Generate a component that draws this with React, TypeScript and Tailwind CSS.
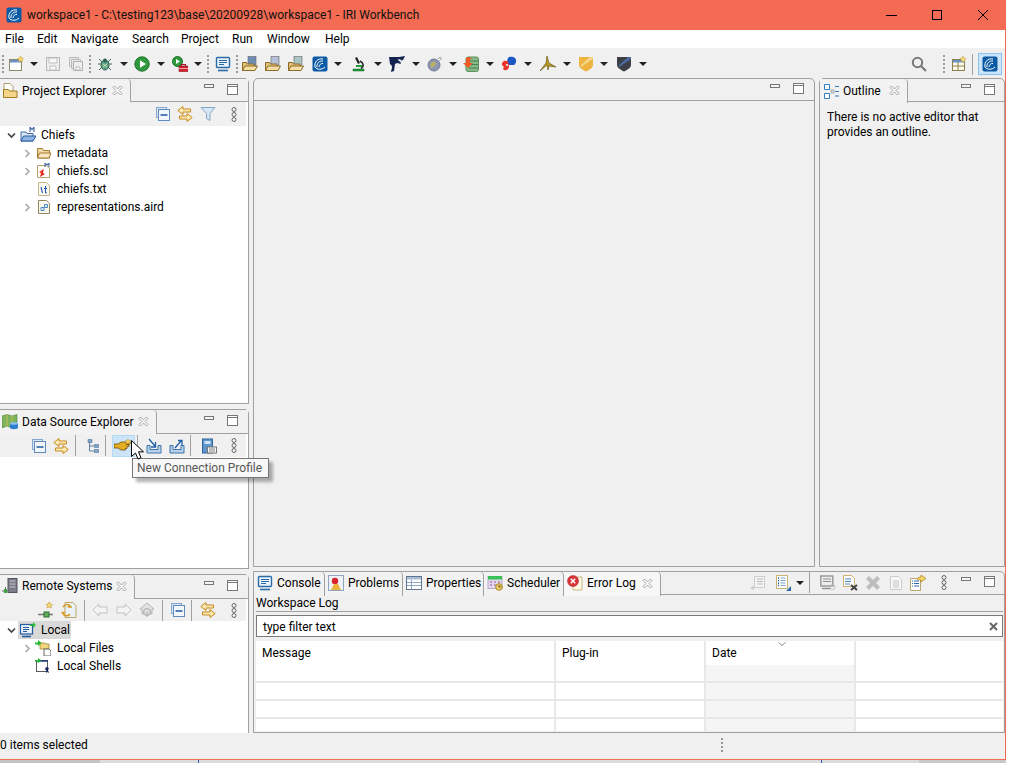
import type { ReactNode } from "react";

type IconProps = { className?: string };

const Ico = ({ className = "", children }: IconProps & { children: ReactNode }) => (
  <svg viewBox="0 0 16 16" className={`w-4 h-4 shrink-0 ${className}`}>{children}</svg>
);

const Arrow = ({ className = "" }: IconProps) => (
  <svg viewBox="0 0 8 4" className={`w-2 h-1 shrink-0 ${className}`}><path d="M0 0h8L4 4z" fill="#222" /></svg>
);

const Iri = ({ className = "" }: IconProps) => (
  <Ico className={className}>
    <rect x="0.5" y="0.5" width="15" height="15" rx="2" fill="#0b5aa5" />
    <path d="M3 11C2 6 6 2 11 3M5 11C4.500 8 7 4.500 11 5M7 11c0-2 2-4 4-3.500M3 11c2 3 7 3 10 0" fill="none" stroke="#fff" strokeWidth="1" />
  </Ico>
);

const NewFile = ({ className = "" }: IconProps) => (
  <Ico className={className}>
    <rect x="1.500" y="3.500" width="12" height="11" fill="#fff" stroke="#8a8a6a" />
    <rect x="2" y="4" width="11" height="2.500" fill="#6c93c8" />
    <path d="M12.500 0l1 2 2 .5-1.500 1.500.5 2-2-1-2 1 .5-2L9.500 2.500l2-.5z" fill="#f5d76e" stroke="#c29a2a" strokeWidth=".5" />
  </Ico>
);

const Save = ({ className = "" }: IconProps) => (
  <Ico className={className}>
    <path d="M1.500 1.500h13v13h-13z" fill="#eee" stroke="#b5b5b5" />
    <path d="M4 2h8v5H4zM5 10h6v4H5z" fill="#f7f7f7" stroke="#c0c0c0" />
  </Ico>
);

const SaveAll = ({ className = "" }: IconProps) => (
  <Ico className={className}>
    <path d="M1.500 1.500h9v9h-9z" fill="#e8e8e8" stroke="#bbb" />
    <path d="M3.500 3.500h9v9h-9z" fill="#e8e8e8" stroke="#bbb" />
    <path d="M5.500 5.500h9v9h-9z" fill="#eee" stroke="#b0b0b0" />
    <path d="M8 11h4v3H8z" fill="#fafafa" stroke="#bbb" />
  </Ico>
);

const Bug = ({ className = "" }: IconProps) => (
  <Ico className={className}>
    <path d="M2 3l3 3M14 3l-3 3M1 8h3M15 8h-3M2 14l3-3M14 14l-3-3" stroke="#3f6b5a" strokeWidth="1" />
    <ellipse cx="8" cy="9" rx="4" ry="5" fill="#5fa08a" stroke="#2f5f50" />
    <circle cx="8" cy="4.500" r="2" fill="#2f5f50" />
    <path d="M6 8l4 3M10 8l-4 3" stroke="#c8e0a0" />
  </Ico>
);

const Run = ({ className = "" }: IconProps) => (
  <Ico className={className}>
    <circle cx="8" cy="8" r="7.200" fill="#2f9a3d" stroke="#1f6f2a" />
    <path d="M6 4.200L12 8l-6 3.800z" fill="#fff" />
  </Ico>
);

const ExtTools = ({ className = "" }: IconProps) => (
  <Ico className={className}>
    <circle cx="5.500" cy="5.500" r="5" fill="#2f9a3d" stroke="#1f6f2a" />
    <path d="M4 3l4 2.500L4 8z" fill="#fff" />
    <rect x="7" y="10" width="9" height="5.500" fill="#d8202f" stroke="#8e1420" strokeWidth=".6" />
    <rect x="9.500" y="8.500" width="4" height="2" fill="none" stroke="#a81824" />
    <path d="M7 12.500h9" stroke="#fff" strokeWidth=".6" />
  </Ico>
);

const Monitor = ({ className = "" }: IconProps) => (
  <Ico className={className}>
    <rect x="1.500" y="1.500" width="13" height="10" rx="1" fill="#eaf2fb" stroke="#2b6ca8" strokeWidth="1.400" />
    <path d="M4 4.500h8M4 6.500h8M4 8.500h5" stroke="#2b6ca8" />
    <path d="M3 14.500h10" stroke="#2b6ca8" strokeWidth="1.600" />
  </Ico>
);

const Folder = ({ accent = "#6e8db5", className = "" }: IconProps & { accent?: string }) => (
  <Ico className={className}>
    <rect x="6" y="0.500" width="8" height="9" fill={accent} stroke="#666" strokeWidth=".6" />
    <path d="M.5 14.500V6.500h4l1 1.500H12v6.500z" fill="#e2c27a" stroke="#8d6b26" />
    <path d="M.5 14.500l2.500-4.500h12.500l-2.500 4.500z" fill="#f5dfa6" stroke="#8d6b26" />
  </Ico>
);

const PlainFolder = ({ className = "" }: IconProps) => (
  <Ico className={className}>
    <path d="M1.500 13V3.500h5l1 2h6V13z" fill="#efd9a7" stroke="#a67c2e" />
    <path d="M1.500 13l2-5h11.500l-2 5z" fill="#f8e7bf" stroke="#a67c2e" />
  </Ico>
);

const Microscope = ({ className = "" }: IconProps) => (
  <Ico className={className}>
    <path d="M6 1l3 6-2 1-3-6z" fill="#222" />
    <path d="M9 5c4 2 4 6 1 7.500" fill="none" stroke="#222" strokeWidth="1.500" />
    <path d="M5 9h6v2H5z" fill="#1f9a3a" />
    <path d="M2 13h11v2H2z" fill="#1f9a3a" stroke="#14692a" strokeWidth=".5" />
  </Ico>
);

const Orca = ({ className = "" }: IconProps) => (
  <Ico className={className}>
    <path d="M0 1h10l6-1-2 4-3 1 1 3-4-1-2 1-1 7-3 1 1-6-2-2z" fill="#13234f" />
    <path d="M9 3l4 1-3 1.500zM1 12l2-1-1 3z" fill="#fff" />
  </Ico>
);

const Globe = ({ className = "" }: IconProps) => (
  <Ico className={className}>
    <circle cx="7" cy="9" r="6" fill="#8d97b5" stroke="#737a92" />
    <path d="M4 7c2-2 4-1 5 0s-1 3-2 3-1 2-2 2-2-3-1-5z" fill="#b8b066" />
    <path d="M11 3l2-2 1.500 1.500-2 2" fill="none" stroke="#999" strokeWidth="1" />
  </Ico>
);

const DbArrow = ({ className = "" }: IconProps) => (
  <Ico className={className}>
    <rect x="3" y="1" width="12.500" height="14.500" rx="2" fill="#86b987" stroke="#5c9160" />
    <path d="M6 5h9M6 8.500h9M6 12h9" stroke="#4a7f50" />
    <path d="M0 7h3V2c2-1 5-1 6 1L7 3v4h3l-5 5z" fill="#ee5a21" />
  </Ico>
);

const Fish = ({ className = "" }: IconProps) => (
  <Ico className={className}>
    <path d="M8 1c4-1 8 1 7 5s-3 3-6 3-4-5-1-8z" fill="#1a56c4" />
    <path d="M3 5c3-1 5 1 5 5s-3 5-5 4 1-3-1-4-1-4 1-5z" fill="#e9352b" />
    <circle cx="6" cy="9" r="1" fill="#fff" />
  </Ico>
);

const Windmill = ({ className = "" }: IconProps) => (
  <Ico className={className}>
    <path d="M7 0l2 7 7 4-7-1-1 4-1-5-7 6 6-8z" fill="#b89a20" stroke="#5e4e0e" strokeWidth=".6" />
  </Ico>
);

const Shield = ({ fill, stripe, className = "" }: IconProps & { fill: string; stripe: string }) => (
  <Ico className={className}>
    <path d="M1 1h14v8c0 3-4 5-7 6.500C5 14 1 12 1 9z" fill={fill} />
    <path d="M3 9l9-8h3v2L3 11z" fill={stripe} />
  </Ico>
);

const Search = ({ className = "" }: IconProps) => (
  <Ico className={className}>
    <circle cx="6.500" cy="6.500" r="4.700" fill="none" stroke="#7a7a7a" strokeWidth="2" />
    <path d="M10 10l5 5" stroke="#7a7a7a" strokeWidth="2.200" />
  </Ico>
);

const Perspective = ({ className = "" }: IconProps) => (
  <Ico className={className}>
    <rect x="1.500" y="3.500" width="12" height="11" fill="#fffbe8" stroke="#8a7f50" />
    <path d="M2 4h11v2.500H2z" fill="#6c93c8" />
    <path d="M7 6v8M2 10h11" stroke="#8a7f50" />
    <path d="M12 0l1 2 2 .5-1.500 1.500.5 2-2-1-2 1 .5-2L9 2.500l2-.5z" fill="#f6dc8c" stroke="#c29a2a" strokeWidth=".5" />
  </Ico>
);

const ViewMenu = ({ className = "" }: IconProps) => (
  <svg viewBox="0 0 6 15" className={`w-[6px] h-[15px] shrink-0 ${className}`}>
    <g fill="none" stroke="#666"><circle cx="3" cy="2.500" r="2" /><circle cx="3" cy="7.500" r="2" /><circle cx="3" cy="12.500" r="2" /></g>
  </svg>
);

const WinBtns = ({ className = "" }: IconProps) => (
  <div className={`flex items-center shrink-0 pb-[2px] ${className}`}>
    <svg viewBox="0 0 10 4" className="w-[10px] h-[4px] mb-[6px]"><rect x=".5" y=".5" width="9" height="3" fill="#f4f4f4" stroke="#777" /></svg>
    <svg viewBox="0 0 11 11" className="w-[11px] h-[11px] ml-[13px]"><rect x=".5" y=".5" width="10" height="10" fill="#fff" stroke="#777" /><path d="M1 2.500h9" stroke="#777" /></svg>
  </div>
);

const TabClose = ({ className = "" }: IconProps) => (
  <svg viewBox="0 0 11 11" className={`w-[11px] h-[11px] shrink-0 ${className}`}>
    <path d="M1 2.500L2.500 1 5.500 4 8.500 1 10 2.500 7 5.500 10 8.500 8.500 10 5.500 7 2.500 10 1 8.500 4 5.500z" fill="#fff" stroke="#8c8c8c" strokeWidth=".8" />
  </svg>
);

const Collapse = ({ className = "" }: IconProps) => (
  <Ico className={className}>
    <rect x="1.500" y="1.500" width="10" height="10" fill="#dbe6f4" stroke="#86a6cc" />
    <rect x="3.500" y="3.500" width="11" height="11" fill="#f2f6fb" stroke="#5e8abd" />
    <path d="M5.500 9h7" stroke="#1d5a9e" strokeWidth="1.500" />
  </Ico>
);

const LinkArrows = ({ className = "" }: IconProps) => (
  <Ico className={className}>
    <path d="M6 .5L.8 4.500 6 8.500V6h7.500V3H6z" fill="#fbe9b4" stroke="#c8891c" />
    <path d="M10 7.500L15.200 11.500 10 15.500V13H2.500v-3H10z" fill="#fbe9b4" stroke="#c8891c" />
  </Ico>
);

const Filter = ({ className = "" }: IconProps) => (
  <Ico className={className}>
    <path d="M1 1.500h14l-5 6v7l-3.500-2V7.500z" fill="#d6e6f5" stroke="#86a6c0" />
  </Ico>
);

const ProjectIcon = ({ className = "" }: IconProps) => (
  <Ico className={className}>
    <path d="M2 .5h6l3 3v5H2z" fill="#fff" stroke="#b09a70" />
    <path d="M1.500 14.500V6.500h5l1 1.500H15v6.500z" fill="#f3d68a" stroke="#a27b25" />
  </Ico>
);

const ProjFolder = ({ className = "" }: IconProps) => (
  <Ico className={className}>
    <path d="M10 5V0l2 2.500L14 0v5" fill="none" stroke="#4a6fa5" strokeWidth="1.200" />
    <path d="M1 14V5h5l1 1.500h6V14z" fill="#dce8f6" stroke="#3d69a3" />
    <path d="M1 14l2.500-5H16l-3 5z" fill="#8eb4e3" stroke="#2b5a9c" />
  </Ico>
);

const SclFile = ({ className = "" }: IconProps) => (
  <Ico className={className}>
    <path d="M1.500 2.500h9l3 3v9h-12z" fill="#fff" stroke="#b6a36e" />
    <path d="M9 4V0l2 2 2-2v4" fill="none" stroke="#4a6fa5" strokeWidth="1.200" />
    <path d="M8 6l-1 4 2 1-5 3 1-4-2-1z" fill="#e6281e" />
  </Ico>
);

const TxtFile = ({ className = "" }: IconProps) => (
  <Ico className={className}>
    <path d="M2.500 1.500h8l3 3v10h-11z" fill="#fdfbf1" stroke="#c3b58a" />
    <path d="M5 6l1.500 6M9.500 5v6.500c0 .5.500.500 1.500.5M8 7.500h3" fill="none" stroke="#2456b8" strokeWidth="1.100" />
  </Ico>
);

const AirdFile = ({ className = "" }: IconProps) => (
  <Ico className={className}>
    <path d="M2.500 1.500h8l3 3v10h-11z" fill="#fdfbf1" stroke="#8f8660" />
    <path d="M8.500 5.500h3v3h-3zM5 8.500h3v3H5z" fill="#e3eefa" stroke="#4f86bf" />
  </Ico>
);

const OutlineIcon = ({ className = "" }: IconProps) => (
  <Ico className={className}>
    <path d="M1.500 1.500h5v5h-5zM1.500 10.500h5v5h-5z" fill="#fff" stroke="#2f7fc1" />
    <path d="M8 9h3M12 3.500h4M12 8.500h4M12 13h4" stroke="#2f7fc1" />
    <rect x="8" y="7" width="3" height="3" fill="#ddd" stroke="#888" strokeWidth=".6" />
  </Ico>
);

const DataSource = ({ className = "" }: IconProps) => (
  <Ico className={className}>
    <path d="M0 2l5-1.500L10 2l5-1.500V12l-5 2-5-2-5 2z" fill="#7cb35c" stroke="#56803e" strokeWidth=".6" />
    <path d="M5 .5V12M10 2v12" stroke="#d5c45c" strokeWidth=".8" />
    <path d="M8 9.500c0-1.500 8-1.500 8 0V14c0 1.500-8 1.500-8 0z" fill="#2e7fd2" />
    <ellipse cx="12" cy="9.500" rx="4" ry="1.200" fill="#8fc3f0" />
  </Ico>
);

const Hierarchy = ({ className = "" }: IconProps) => (
  <Ico className={className}>
    <path d="M4.500 3v10M4.500 8h5M4.500 13h5" stroke="#5e7f9e" fill="none" />
    <path d="M3 1.500h4v3H3zM9.500 6.500h4v3h-4zM9.500 11.500h4v3h-4z" fill="#7fa6cc" stroke="#4f7394" strokeWidth=".6" />
  </Ico>
);

const Hand = ({ className = "" }: IconProps) => (
  <svg viewBox="0 0 20 16" className={`w-5 h-4 shrink-0 ${className}`}>
    <path d="M0 6h4l3-2h9v2l-4 .5h3v2h-2v2h-1.500V12H7L4 10H0z" fill="#e4ae20" stroke="#6f4d0a" strokeWidth=".8" />
    <path d="M14 1l1 1.500 2 .5-1.500 1 .5 2-2-1-2 1 .5-2L11 3l2-.5z" fill="#f7d566" stroke="#b8871a" strokeWidth=".5" />
  </svg>
);

const TrayArrow = ({ out = false, className = "" }: IconProps & { out?: boolean }) => (
  <Ico className={className}>
    <path d="M1 7.500h3v4h8v-4h3v7.500H1z" fill="#b9d2ea" stroke="#3d73a8" />
    <path d={out ? "M6 10l6-7M9 2.500h4V7" : "M3 1l6 7M9.500 4v5H5"} fill="none" stroke="#1e5ea8" strokeWidth="1.300" />
  </Ico>
);

const DbBook = ({ className = "" }: IconProps) => (
  <Ico className={className}>
    <rect x="1.500" y="1" width="10" height="14" fill="#5e96cb" stroke="#2f659c" />
    <rect x="3.500" y="3" width="6" height="3" fill="#cfe2f4" />
    <rect x="6.500" y="9" width="9" height="6" fill="#f4f4f4" stroke="#777" />
    <path d="M8 11h6M8 13h6" stroke="#888" />
  </Ico>
);

const RemoteSys = ({ className = "" }: IconProps) => (
  <Ico className={className}>
    <rect x="6" y="0.500" width="9" height="14" fill="#7b7b88" stroke="#55555f" />
    <path d="M7.500 3h6M7.500 6h6M7.500 9h6" stroke="#c5c5d0" />
    <path d="M0 13h7M3.500 9v5" stroke="#6a6a6a" />
    <rect x="2" y="11" width="3" height="4" fill="#3aa63f" />
  </Ico>
);

const NewConn = ({ className = "" }: IconProps) => (
  <Ico className={className}>
    <path d="M0 12.500h15" stroke="#777" strokeWidth="1.500" />
    <rect x="6" y="10" width="5" height="5" fill="#5fae5a" stroke="#2f6f2e" />
    <path d="M10 2l1.200-2 1.200 2 2 .5-1.500 1.500.3 2-2-1-2 1 .3-2L8 2.500z" fill="#f8d878" stroke="#b8871a" strokeWidth=".5" />
  </Ico>
);

const Refresh = ({ className = "" }: IconProps) => (
  <Ico className={className}>
    <path d="M4 .5h8l3 3v12H4z" fill="#eaf1f9" stroke="#bda566" />
    <path d="M2 5c2-3 6-3 7-1l-2 1h4M9 12c-2 3-7 2-7-1l2-.5H.5" fill="none" stroke="#d39a1f" strokeWidth="1.500" />
  </Ico>
);

const NavArrow = ({ back = false, className = "" }: IconProps & { back?: boolean }) => (
  <Ico className={className}>
    <path d={back ? "M7 2L1 8l6 6v-3h8V5H7z" : "M9 2l6 6-6 6v-3H1V5h8z"} fill="#f4f4f4" stroke="#c3c3c3" />
  </Ico>
);

const Home = ({ className = "" }: IconProps) => (
  <Ico className={className}>
    <path d="M8 1l7 6h-2v5H3V7H1z" fill="#e2e2e2" stroke="#b5b5b5" />
    <circle cx="8" cy="10" r="3.500" fill="#dcdcdc" stroke="#aaa" />
    <path d="M8 10v5" stroke="#aaa" />
  </Ico>
);

const LocalIcon = ({ className = "" }: IconProps) => (
  <Ico className={className}>
    <rect x="0.500" y="2.500" width="12" height="9.500" fill="#eaf1f9" stroke="#1f5d9e" strokeWidth="1.200" />
    <path d="M3 5.500h6M3 7.500h6M3 9.500h4" stroke="#1f5d9e" />
    <path d="M2 14.500h9" stroke="#1f5d9e" strokeWidth="1.600" />
    <path d="M10 2.500h3V0l3 3-3 3V4h-3z" fill="#2fbf3c" />
  </Ico>
);

const LocalFiles = ({ className = "" }: IconProps) => (
  <Ico className={className}>
    <path d="M5 3h5l1 1h3v5H5z" fill="#f1d67c" stroke="#96782a" strokeWidth=".7" />
    <path d="M9 9h5l2 2v5H9z" fill="#fff" stroke="#666" />
    <path d="M0 2.500h3V0l3.500 3L3 6V4.500H0z" fill="#22b52e" />
  </Ico>
);

const LocalShells = ({ className = "" }: IconProps) => (
  <Ico className={className}>
    <rect x="1.500" y="2.500" width="11" height="11" fill="#fff" stroke="#5a5a5a" />
    <path d="M2 3h11" stroke="#253a80" strokeWidth="1.500" />
    <path d="M11 9l3 1-1 2 1 3-2-1-1 1.500.5-3-1.500-1z" fill="#13235f" />
    <path d="M0 2h3V0l3.500 2.500L3 5V3.500H0z" fill="#22b52e" />
  </Ico>
);

const ProblemsIcon = ({ className = "" }: IconProps) => (
  <Ico className={className}>
    <rect x=".5" y=".5" width="15" height="15" fill="#eef2f7" stroke="#8fa4bd" />
    <circle cx="7" cy="6" r="3.200" fill="#d8222c" />
    <path d="M3 15l3-6h4l3 6z" fill="#edb03b" />
  </Ico>
);

const PropsIcon = ({ className = "" }: IconProps) => (
  <Ico className={className}>
    <rect x=".5" y="1.500" width="15" height="13" fill="#fff" stroke="#5c7590" />
    <path d="M1 2h14v2.500H1z" fill="#a9bed4" />
    <path d="M5.500 4.500v10M1 7.500h14M1 10.500h14" stroke="#8ea6bf" />
  </Ico>
);

const Scheduler = ({ className = "" }: IconProps) => (
  <Ico className={className}>
    <rect x="1" y="1.500" width="14" height="12" fill="#e4d9ea" stroke="#b9a8c8" />
    <path d="M1 1h14v3.500H1z" fill="#38c257" />
    <path d="M3 7h2M7 7h2M11 7h2M3 10h2M7 10h2" stroke="#a783bd" strokeWidth="1.300" />
    <circle cx="12" cy="12" r="3.300" fill="#f1d06a" stroke="#a98a2a" />
    <path d="M12 10v2h2" stroke="#6a5412" fill="none" />
  </Ico>
);

const ErrorLogIcon = ({ className = "" }: IconProps) => (
  <Ico className={className}>
    <path d="M6 2h9v13H6z" fill="#fdf8e6" stroke="#c9b885" />
    <circle cx="6" cy="6" r="5.500" fill="#d9353b" stroke="#a81a20" strokeWidth=".5" />
    <path d="M3.800 3.800l4.400 4.400M8.200 3.800L3.800 8.200" stroke="#fff" strokeWidth="1.500" />
  </Ico>
);

const GreyList = ({ className = "" }: IconProps) => (
  <Ico className={className}>
    <path d="M4.500 1.500h10v11h-10z" fill="#f6f6f6" stroke="#ccc" />
    <path d="M7 4h6M7 6.500h6M7 9h6" stroke="#b8b8b8" />
    <path d="M0 13l4-2.500V15z" fill="#ccc" />
  </Ico>
);

const BlueList = ({ className = "" }: IconProps) => (
  <Ico className={className}>
    <path d="M1.500 .5h11v13h-11z" fill="#fff" stroke="#c7b36e" />
    <path d="M3 3h1M3 5.500h1M3 8h1M3 10.500h1" stroke="#1f5d9e" strokeWidth="1.400" />
    <path d="M5.500 3h5M5.500 5.500h5M5.500 8h5M5.500 10.500h5" stroke="#7aa7d4" />
    <path d="M16 11v5h-5z" fill="#2b6ca8" />
  </Ico>
);

const ConsoleGrey = ({ className = "" }: IconProps) => (
  <Ico className={className}>
    <rect x=".8" y="1" width="12" height="10" fill="#eee" stroke="#8e8e8e" strokeWidth="1.300" />
    <path d="M3 4h8M3 6.500h8" stroke="#8e8e8e" />
    <path d="M2 13.500h8" stroke="#8e8e8e" strokeWidth="1.400" />
    <circle cx="12.500" cy="12" r="2.500" fill="none" stroke="#bbb" />
  </Ico>
);

const ClearLog = ({ className = "" }: IconProps) => (
  <Ico className={className}>
    <path d="M1.500 .5h8l3 3v8h-11z" fill="#fff" stroke="#c7b36e" />
    <path d="M3 4h6M3 6.500h6M3 9h5" stroke="#4a7ebb" />
    <path d="M9 10l6 5M15 10l-6 5" stroke="#444" strokeWidth="2" />
  </Ico>
);

const GreyX = ({ className = "" }: IconProps) => (
  <Ico className={className}>
    <path d="M1 4l3-3 4 4 4-4 3 3-4 4 4 4-3 3-4-4-4 4-3-3 4-4z" fill="#bdbdbd" />
  </Ico>
);

const GreyDoc = ({ className = "" }: IconProps) => (
  <Ico className={className}>
    <path d="M2.500 1.500h8l3 3v10h-11z" fill="#f7f7f7" stroke="#ccc" />
    <path d="M5 6h6M5 8h6M5 10h6M5 12h6" stroke="#c6c6c6" />
  </Ico>
);

const ExportLog = ({ className = "" }: IconProps) => (
  <Ico className={className}>
    <path d="M.5 3.500h10v12H.5z" fill="#fff" stroke="#b8a86f" />
    <path d="M2 6h1M2 8.500h1M2 11h1M4 6h5M4 8.500h5M4 11h5" stroke="#2c68ae" />
    <path d="M7 4c1-2 3-2 4-2V0l5 3.500L11 7V5c-2 0-3 0-4-1z" fill="#f6d768" stroke="#a97e14" strokeWidth=".7" />
  </Ico>
);

const Cursor = () => (
  <svg viewBox="0 0 13 20" className="absolute left-[131px] top-[440px] w-[13px] h-5">
    <path d="M.5.5v16l4-3.500 2.500 6 3-1.200-2.500-6h5z" fill="#fff" stroke="#000" />
  </svg>
);

const Sep = ({ className = "" }: IconProps) => <div className={`w-px h-[21px] bg-[#a0a0a0] shrink-0 ${className}`} />;
const Grip = ({ className = "" }: IconProps) => (
  <div className={`w-[2px] h-[18px] shrink-0 bg-[repeating-linear-gradient(to_bottom,#9a9a9a_0,#9a9a9a_2px,transparent_2px,transparent_4px)] ${className}`} />
);

const Tab = ({ icon, label, close, className = "" }: { icon: ReactNode; label: string; close?: boolean; className?: string }) => (
  <div className={`flex items-center bg-[#f2f2f2] border-r border-[#a0a0a0] h-[24px] shrink-0 whitespace-nowrap rounded-tr-[4px] ${className}`}>
    {icon}
    <span className="ml-[4px]">{label}</span>
    {close && <TabClose className="ml-auto mr-[7px]" />}
  </div>
);

const Chevron = ({ open = false, className = "" }: IconProps & { open?: boolean }) => (
  <svg viewBox="0 0 9 9" className={`w-[9px] h-[9px] shrink-0 ${className}`}>
    <path d={open ? "M1 2.500l3.500 3.500L8 2.500" : "M2.500 1L6 4.500 2.500 8"} fill="none" stroke={open ? "#444" : "#aaa"} strokeWidth="1.700" />
  </svg>
);

const Row = ({ children, className = "" }: { children: ReactNode; className?: string }) => (
  <div className={`flex items-center h-[18px] ${className}`}>{children}</div>
);

export default function App() {
  return (
    <div className="relative w-[1009px] h-[763px] overflow-hidden bg-white text-[12px] leading-[16px] text-black font-['Roboto','Liberation_Sans',sans-serif]">
      <div className="w-[1006px] h-[760px] flex flex-col bg-[#f0f0f0] border-r border-b border-[#f26b52]">
        {/* title bar */}
        <div className="h-[30px] bg-[#f26b52] flex items-center shrink-0 pl-[6px]">
          <Iri />
          <span className="ml-[5px] text-[#111]">workspace1 - C:\testing123\base\20200928\workspace1 - IRI Workbench</span>
          <div className="ml-auto flex items-center">
            <div className="w-[11px] h-px bg-black mr-[35px]" />
            <div className="w-[10px] h-[10px] border border-black mr-[36px]" />
            <svg viewBox="0 0 10 10" className="w-[10px] h-[10px] mr-[17px]"><path d="M0 0l10 10M10 0L0 10" stroke="#000" /></svg>
          </div>
        </div>

        {/* menu */}
        <div className="h-[18px] bg-white flex items-center pl-[5px] shrink-0">
          <span className="w-[32px]">File</span>
          <span className="w-[34px]">Edit</span>
          <span className="w-[61px]">Navigate</span>
          <span className="w-[49px]">Search</span>
          <span className="w-[51px]">Project</span>
          <span className="w-[35px]">Run</span>
          <span className="w-[58px]">Window</span>
          <span>Help</span>
        </div>

        {/* main toolbar */}
        <div className="h-[30px] flex items-center shrink-0 pl-[2px] pr-[3px] pt-[2px]">
          <Grip />
          <NewFile className="ml-[4px]" />
          <Arrow className="ml-[6px]" />
          <Save className="ml-[7px]" />
          <SaveAll className="ml-[7px]" />
          <Grip className="ml-[5px]" />
          <Bug className="ml-[6px]" />
          <Arrow className="ml-[7px]" />
          <Run className="ml-[6px]" />
          <Arrow className="ml-[7px]" />
          <ExtTools className="ml-[7px]" />
          <Arrow className="ml-[6px]" />
          <Grip className="ml-[5px]" />
          <Monitor className="ml-[6px]" />
          <Grip className="ml-[5px]" />
          <Folder className="ml-[4px]" />
          <Folder accent="#b6c0d8" className="ml-[7px]" />
          <Folder accent="#a8c4c4" className="ml-[7px]" />
          <Iri className="ml-[8px]" />
          <Arrow className="ml-[6px]" />
          <Microscope className="ml-[9px]" />
          <Arrow className="ml-[7px]" />
          <Orca className="ml-[7px]" />
          <Arrow className="ml-[7px]" />
          <Globe className="ml-[7px]" />
          <Arrow className="ml-[6px]" />
          <DbArrow className="ml-[6px]" />
          <Arrow className="ml-[7px]" />
          <Fish className="ml-[7px]" />
          <Arrow className="ml-[7px]" />
          <Windmill className="ml-[8px]" />
          <Arrow className="ml-[7px]" />
          <Shield fill="#efb340" stripe="#f5d68c" className="ml-[7px]" />
          <Arrow className="ml-[6px]" />
          <Shield fill="#3d3f47" stripe="#4a6aa0" className="ml-[8px]" />
          <Arrow className="ml-[7px]" />
          <Search className="ml-auto" />
          <Grip className="ml-[16px]" />
          <Perspective className="ml-[6px]" />
          <Sep className="ml-[5px] h-[18px]" />
          <div className="ml-[5px] w-[24px] h-[22px] bg-[#cce4f7] border border-[#8cc2ec] flex items-center justify-center"><Iri /></div>
        </div>

        {/* perspective */}
        <div className="flex flex-1 min-h-0 gap-[4px]">
          {/* left stack */}
          <div className="w-[249px] flex flex-col gap-[5px] shrink-0">
            <section className="h-[326px] flex flex-col border-t border-r border-b border-[#a0a0a0] rounded-tr-[5px] bg-white">
              <header className="h-[23px] flex bg-[#f0f0f0] border-b border-[#a0a0a0] shrink-0">
                <Tab icon={<ProjectIcon />} label="Project Explorer" close className="w-[131px] pl-[2px] pb-[1px]" />
                <WinBtns className="ml-auto mr-[10px]" />
              </header>
              <div className="h-[24px] flex items-center bg-[#f0f0f0] shrink-0 mr-[2px] pl-[155px]">
                <Collapse /><LinkArrows className="ml-[6px]" /><Filter className="ml-[7px]" /><ViewMenu className="ml-[15px]" />
              </div>
              <Row className="pl-[7px]"><Chevron open /><ProjFolder className="ml-[4px]" /><span className="ml-[5px]">Chiefs</span></Row>
              <Row className="pl-[23px]"><Chevron /><PlainFolder className="ml-[4px]" /><span className="ml-[5px]">metadata</span></Row>
              <Row className="pl-[23px]"><Chevron /><SclFile className="ml-[4px]" /><span className="ml-[5px]">chiefs.scl</span></Row>
              <Row className="pl-[36px]"><TxtFile /><span className="ml-[5px]">chiefs.txt</span></Row>
              <Row className="pl-[23px]"><Chevron /><AirdFile className="ml-[4px]" /><span className="ml-[5px]">representations.aird</span></Row>
            </section>

            <section className="h-[160px] flex flex-col border-t border-r border-b border-[#a0a0a0] rounded-tr-[5px] bg-white">
              <header className="h-[24px] flex bg-[#f0f0f0] border-b border-[#a0a0a0] shrink-0">
                <Tab icon={<DataSource />} label="Data Source Explorer" close className="w-[157px] pl-[2px] pb-[1px]" />
                <WinBtns className="ml-auto mr-[10px]" />
              </header>
              <div className="h-[23px] flex items-center bg-[#f0f0f0] shrink-0 mr-[2px] pl-[31px]">
                <Collapse /><LinkArrows className="ml-[6px]" /><Sep className="ml-[6px]" /><Hierarchy className="ml-[9px]" /><Sep className="ml-[4px]" />
                <div className="ml-[6px] w-[23px] h-[22px] bg-[#cce4f7] border border-[#b5d8f3] flex items-center justify-center"><Hand /></div>
                <Sep className="ml-[2px]" /><TrayArrow className="ml-[8px]" /><TrayArrow out className="ml-[7px]" /><Sep className="ml-[5px]" /><DbBook className="ml-[10px]" /><ViewMenu className="ml-[14px]" />
              </div>
            </section>

            <section className="flex-1 flex flex-col border-t border-r border-[#a0a0a0] rounded-tr-[5px] bg-white">
              <header className="h-[24px] flex bg-[#f0f0f0] border-b border-[#a0a0a0] shrink-0">
                <Tab icon={<RemoteSys />} label="Remote Systems" close className="w-[135px] pl-[2px] pb-[2px]" />
                <WinBtns className="ml-auto mr-[10px]" />
              </header>
              <div className="h-[22px] flex items-center bg-[#f0f0f0] shrink-0 mr-[2px] pl-[38px]">
                <NewConn /><Refresh className="ml-[7px]" /><Sep className="ml-[7px]" /><NavArrow back className="ml-[7px]" /><NavArrow className="ml-[8px]" /><Home className="ml-[7px]" /><Sep className="ml-[7px]" /><Collapse className="ml-[7px]" /><Sep className="ml-[5px]" /><LinkArrows className="ml-[8px]" /><ViewMenu className="ml-[15px]" />
              </div>
              <Row className="pl-[7px]"><Chevron open /><div className="ml-[2px] h-[18px] w-[53px] flex items-center bg-[#d9d9d9] pl-[2px]"><LocalIcon /><span className="ml-[5px]">Local</span></div></Row>
              <Row className="pl-[23px]"><Chevron /><LocalFiles className="ml-[3px]" /><span className="ml-[6px]">Local Files</span></Row>
              <Row className="pl-[35px]"><LocalShells /><span className="ml-[6px]">Local Shells</span></Row>
            </section>
          </div>

          {/* right area */}
          <div className="flex-1 min-w-0 flex flex-col gap-[4px]">
            <div className="h-[489px] flex gap-[4px] shrink-0">
              <section className="w-[562px] border border-[#a0a0a0] rounded-t-[5px] flex flex-col">
                <header className="h-[22px] flex border-b border-[#a0a0a0] shrink-0">
                  <WinBtns className="ml-auto mr-[10px]" />
                </header>
              </section>
              <section className="flex-1 border border-[#a0a0a0] rounded-t-[5px] flex flex-col">
                <header className="h-[23px] flex border-b border-[#a0a0a0] shrink-0">
                  <Tab icon={<OutlineIcon />} label="Outline" close className="w-[88px] pl-[3px] pb-[1px]" />
                  <WinBtns className="ml-auto mr-[9px]" />
                </header>
                <p className="px-[7px] pt-[8px] leading-[15px]">There is no active editor that provides an outline.</p>
              </section>
            </div>

            <section className="flex-1 min-h-0 flex flex-col border border-[#a0a0a0] rounded-tr-[5px]">
              <header className="h-[23px] flex border-b border-[#a0a0a0] shrink-0">
                <Tab icon={<Monitor />} label="Console" className="w-[71px] pl-[3px] pb-[2px] rounded-none" />
                <Tab icon={<ProblemsIcon />} label="Problems" className="w-[78px] pl-[3px] pb-[2px] rounded-none" />
                <Tab icon={<PropsIcon />} label="Properties" className="w-[81px] pl-[3px] pb-[2px] rounded-none" />
                <Tab icon={<Scheduler />} label="Scheduler" className="w-[80px] pl-[3px] pb-[2px] rounded-none" />
                <Tab icon={<ErrorLogIcon />} label="Error Log" close className="w-[97px] pl-[3px] pb-[2px] bg-[#f7f7f7]" />
                <div className="ml-auto flex items-center pr-[9px] pb-[1px]">
                  <GreyList /><BlueList className="ml-[9px]" /><Arrow className="ml-[5px]" /><Sep className="ml-[5px]" /><ConsoleGrey className="ml-[10px]" /><ClearLog className="ml-[6px]" /><GreyX className="ml-[7px]" /><GreyDoc className="ml-[7px]" /><ExportLog className="ml-[6px]" /><ViewMenu className="ml-[15px]" /><WinBtns className="ml-[14px]" />
                </div>
              </header>
              <div className="flex-1 min-h-0 flex flex-col pl-[2px] pr-[1px]">
                <div className="h-[17px] flex items-end border-b border-[#a0a0a0] shrink-0 leading-[15px]">Workspace Log</div>
                <div className="mt-[3px] h-[22px] border border-[#7a7a7a] bg-white flex items-center justify-between pl-[6px] pr-[4px] pt-[1px] shrink-0">
                  <span>type filter text</span>
                  <svg viewBox="0 0 9 9" className="w-[9px] h-[9px]"><path d="M1 1l7 7M8 1L1 8" stroke="#666" strokeWidth="2" /></svg>
                </div>
                <div className="mt-[4px] flex-1 min-h-0 bg-white grid grid-cols-[300px_150px_150px_1fr] grid-rows-[24px_18px_18px_18px_12px] mb-[1px]">
                  <div className="border-r-2 border-[#e8e8e8] pl-[6px] pt-[4px]">Message</div>
                  <div className="border-r-2 border-[#e8e8e8] pl-[6px] pt-[4px]">Plug-in</div>
                  <div className="relative border-r-2 border-[#e8e8e8] pl-[6px] pt-[4px]">
                    Date
                    <svg viewBox="0 0 8 4" className="absolute left-[72px] top-[1px] w-2 h-1"><path d="M.5.5L4 3.500 7.500.5" fill="none" stroke="#888" /></svg>
                  </div>
                  <div />
                  {[0, 1, 2, 3].map(i => (
                    <div key={i} className="contents">
                      <div className={`border-r-2 border-[#e8e8e8] ${i < 3 ? "border-b-2" : ""}`} />
                      <div className={`border-r-2 border-[#e8e8e8] ${i < 3 ? "border-b-2" : ""}`} />
                      <div className={`border-r-2 border-[#e8e8e8] bg-[#f5f5f5] ${i < 3 ? "border-b-2" : ""}`} />
                      <div className={`border-[#e8e8e8] ${i < 3 ? "border-b-2" : ""}`} />
                    </div>
                  ))}
                </div>
              </div>
            </section>
          </div>
        </div>

        {/* status bar */}
        <div className="h-[26px] shrink-0 flex items-center">
          <span className="w-[721px] pb-[3px]">0 items selected</span>
          <div className="w-[2px] h-[16px] bg-[repeating-linear-gradient(to_bottom,#9a9a9a_0,#9a9a9a_2px,transparent_2px,transparent_4px)]" />
        </div>
      </div>

      {/* strip of whatever lies behind the window */}
      <div className="h-[3px] w-[1006px] flex">
        <div className="w-[100px] bg-[#c4c4c4]" />
        <div className="w-[98px] bg-[#dcdcdc]" />
        <div className="w-px bg-[#3b5fc0]" />
        <div className="w-[622px] bg-[#dcdcdc]" />
        <div className="w-px bg-[#3b5fc0]" />
        <div className="w-[97px] bg-[#dcdcdc]" />
        <div className="flex-1 bg-[#c8c8c8]" />
      </div>

      {/* tooltip and pointer */}
      <div className="absolute left-[132px] top-[458px] w-[137px] h-[20px] bg-[#f8f8f8] border border-[#767676] shadow-[4px_4px_3px_rgba(0,0,0,0.3)] flex items-center pl-[4px] text-[#575757] whitespace-nowrap">New Connection Profile</div>
      <Cursor />
    </div>
  );
}
